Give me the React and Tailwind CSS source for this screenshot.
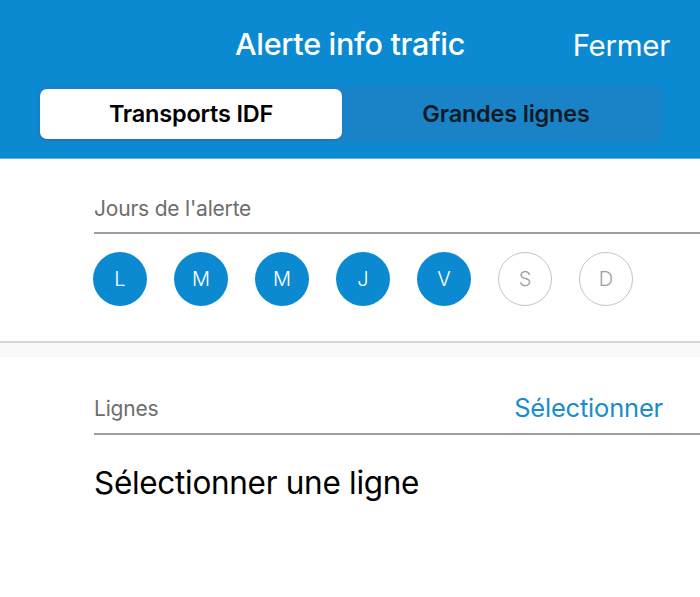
import React from 'react';

const days = [
  { letter: 'L', on: true },
  { letter: 'M', on: true },
  { letter: 'M', on: true },
  { letter: 'J', on: true },
  { letter: 'V', on: true },
  { letter: 'S', on: false },
  { letter: 'D', on: false },
];

const DayBubble = ({ letter, on }) => (
  <div
    className={
      on
        ? 'w-[54px] h-[54px] rounded-full bg-[#0b8ad2] text-white flex items-center justify-center text-[20px] font-light'
        : 'w-[54px] h-[54px] rounded-full border-[1.5px] border-[#c4c4c4] text-[#9e9e9e] flex items-center justify-center text-[20px] font-light'
    }
  >
    {letter}
  </div>
);

export default function App() {
  return (
    <div className="w-[700px] h-[597px] bg-white overflow-hidden font-['Inter',sans-serif]">
      <header className="h-[159px] bg-[#0b8ad2] border-b border-[#5fb6e6] flex flex-col">
        <div className="relative h-[86px] flex items-center justify-center pt-[2px]">
          <h1 className="text-white text-[30.5px] font-medium tracking-[-0.3px] leading-[36px]">Alerte info trafic</h1>
          <span className="absolute right-[30px] top-[27px] text-white text-[29.5px] tracking-[-0.3px] leading-[36px]">Fermer</span>
        </div>
        <div className="mx-[37px] h-[56px] rounded-[9px] bg-[#1a83c8] p-[3px] flex">
          <div className="w-[302px] rounded-[7px] bg-white shadow-sm flex items-center justify-center text-[23.5px] font-semibold text-black tracking-[-0.2px]">
            Transports IDF
          </div>
          <div className="flex-1 flex items-center justify-center pl-[10px] text-[23.5px] font-semibold text-[#0f1a24] tracking-[-0.2px]">
            Grandes lignes
          </div>
        </div>
      </header>

      <section className="pl-[94px] pt-[37px]">
        <div className="text-[21px] text-[#6d6d6d] leading-[26px] tracking-[-0.2px]">Jours de l'alerte</div>
        <div className="mt-[10px] h-[2px] bg-[#9e9e9e]" />
        <div className="flex gap-[27px] mt-[18px] -ml-[1px]">
          {days.map((d, i) => (
            <DayBubble key={i} letter={d.letter} on={d.on} />
          ))}
        </div>
      </section>

      <div className="mt-[35px] h-[2px] bg-[#d6d6d6]" />
      <div className="h-[14px] bg-[#f9f9fb]" />

      <section className="pl-[94px] pt-[37px]">
        <div className="flex items-end justify-between pr-[37px]">
          <span className="text-[21px] text-[#6d6d6d] leading-[26px] tracking-[-0.2px]">Lignes</span>
          <span className="text-[25.5px] text-[#1b8ccb] leading-[28px] tracking-[-0.2px]">Sélectionner</span>
        </div>
        <div className="mt-[11px] h-[2px] bg-[#9e9e9e]" />
        <div className="mt-[29px] text-[31.5px] text-black leading-[38px] tracking-[-0.3px]">Sélectionner une ligne</div>
      </section>
    </div>
  );
}
